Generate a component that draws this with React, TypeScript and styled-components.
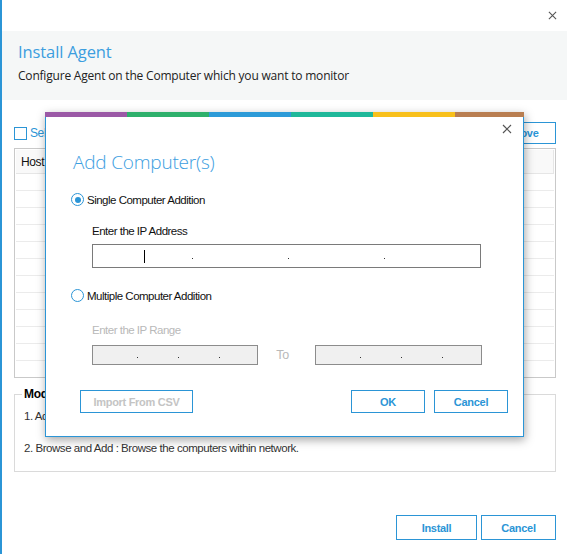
import React from "react";
import styled, { createGlobalStyle } from "styled-components";

const BLUE = "#2b95d6";
const WIN = `"Liberation Sans", Arial, sans-serif`;
const UI = `"Open Sans", "Noto Sans", sans-serif`;

const Global = createGlobalStyle`
  html, body { margin: 0; padding: 0; background: #fff; }
  * { box-sizing: border-box; }
`;

const Window = styled.div`
  position: relative;
  width: 567px;
  height: 554px;
  overflow: hidden;
  background: #fff;
  border-left: 2px solid ${BLUE};
  display: flex;
  flex-direction: column;
`;

const TopBar = styled.div`
  height: 31px;
  display: flex;
  align-items: center;
  justify-content: flex-end;
  padding-right: 10px;
`;

const CloseBtn = styled.span<{ $size: number }>`
  display: inline-flex;
  width: ${(p) => p.$size}px;
  height: ${(p) => p.$size}px;
  color: #555;
`;

const Header = styled.div`
  height: 69px;
  background: #f5f7f7;
  padding: 9px 16px 0 16px;
`;

const HeaderTitle = styled.div`
  font-family: ${UI};
  font-weight: 400;
  font-size: 16.5px;
  line-height: 24px;
  color: #3c9edf;
  letter-spacing: -0.1px;
`;

const HeaderSub = styled.div`
  margin-top: 3px;
  font-family: ${UI};
  font-size: 12px;
  line-height: 18px;
  color: #222;
  letter-spacing: -0.2px;
`;

const Body = styled.div`
  padding: 0 11px 0 12px;
  display: flex;
  flex-direction: column;
`;

const Toolbar = styled.div`
  margin-top: 22px;
  height: 22px;
  display: flex;
  align-items: center;
  justify-content: space-between;
`;

const CheckLabel = styled.label`
  display: flex;
  align-items: center;
  gap: 3px;
  font-family: ${WIN};
  font-size: 12px;
  letter-spacing: -0.4px;
  color: ${BLUE};
`;

const CheckBox = styled.span`
  width: 13px;
  height: 13px;
  border: 1px solid ${BLUE};
  background: #fff;
`;

const OutlineButton = styled.button<{ $w: number; $h: number; $muted?: boolean }>`
  width: ${(p) => p.$w}px;
  height: ${(p) => p.$h}px;
  border: 1px solid ${BLUE};
  background: #fff;
  font-family: ${WIN};
  font-weight: 700;
  font-size: 11px;
  letter-spacing: -0.3px;
  color: ${(p) => (p.$muted ? "#c4c4c4" : BLUE)};
  padding: 0;
  cursor: default;
`;

const Table = styled.div`
  margin-top: 4px;
  height: 230px;
  border: 1px solid #c9c9c9;
  padding: 1px;
  display: flex;
  flex-direction: column;
`;

const HeadRow = styled.div`
  height: 24px;
  background: #f9f9f9;
  border-bottom: 1px solid #e6e6e6;
  display: flex;
`;

const HeadCell = styled.div<{ $w?: number }>`
  width: ${(p) => (p.$w ? `${p.$w}px` : "auto")};
  flex: ${(p) => (p.$w ? "none" : "1")};
  border-right: 1px solid #e6e6e6;
  padding-left: 5px;
  display: flex;
  align-items: center;
  font-family: ${WIN};
  font-size: 12px;
  letter-spacing: -0.4px;
  color: #111;
`;

const Row = styled.div`
  height: 17px;
  border-bottom: 1px solid #ebebeb;
  flex: none;
`;

const Group = styled.fieldset`
  margin: 9px 0 0 0;
  padding: 6px 10px 0 9px;
  height: 85px;
  border: 1px solid #dadada;
`;

const Legend = styled.legend`
  padding: 0 2px;
  margin-left: -2px;
  font-family: ${WIN};
  font-weight: 700;
  font-size: 12px;
  line-height: 14px;
  letter-spacing: -0.3px;
  color: #000;
`;

const GroupLine = styled.div<{ $gap: number }>`
  margin-top: ${(p) => p.$gap}px;
  font-family: ${WIN};
  font-size: 11.5px;
  line-height: 14px;
  letter-spacing: -0.45px;
  color: #333;
`;

const Footer = styled.div`
  margin-top: 43px;
  display: flex;
  justify-content: flex-end;
  gap: 4px;
`;

/* ---------- dialog ---------- */

const Dialog = styled.div`
  position: absolute;
  left: 43px;
  top: 112px;
  width: 479px;
  height: 325px;
  background: #fff;
  border: 1px solid ${BLUE};
  border-top: none;
  box-shadow: 1px 3px 9px rgba(0, 0, 0, 0.35);
  display: flex;
  flex-direction: column;
`;

const Stripe = styled.div`
  height: 5px;
  display: flex;
  margin: 0 -1px;
`;

const StripeSeg = styled.span<{ $c: string; $w: number }>`
  width: ${(p) => p.$w}px;
  flex: none;
  background: ${(p) => p.$c};
`;

const DialogClose = styled.div`
  height: 24px;
  display: flex;
  align-items: center;
  justify-content: flex-end;
  padding-right: 11px;
`;

const DialogTitle = styled.div`
  margin: 8px 0 0 27px;
  font-family: ${UI};
  font-weight: 300;
  font-size: 19px;
  line-height: 26px;
  color: #3c9edf;
  letter-spacing: -0.2px;
`;

const RadioRow = styled.label<{ $mt: number }>`
  margin: ${(p) => p.$mt}px 0 0 25px;
  height: 15px;
  display: flex;
  align-items: center;
  gap: 3px;
  font-family: ${WIN};
  font-size: 11.5px;
  letter-spacing: -0.5px;
  color: #111;
`;

const Radio = styled.span<{ $on?: boolean }>`
  width: 13px;
  height: 13px;
  border-radius: 50%;
  border: 1px solid ${BLUE};
  display: flex;
  align-items: center;
  justify-content: center;
  &::after {
    content: "";
    width: 6px;
    height: 6px;
    border-radius: 50%;
    background: ${(p) => (p.$on ? BLUE : "transparent")};
  }
`;

const FieldLabel = styled.div<{ $mt: number; $muted?: boolean }>`
  margin: ${(p) => p.$mt}px 0 0 46px;
  font-family: ${WIN};
  font-size: 11.5px;
  line-height: 14px;
  letter-spacing: -0.5px;
  color: ${(p) => (p.$muted ? "#b9b9b9" : "#111")};
`;

const IpBox = styled.div<{ $w: number; $h: number; $disabled?: boolean }>`
  width: ${(p) => p.$w}px;
  height: ${(p) => p.$h}px;
  border: 1px solid ${(p) => (p.$disabled ? "#8c8c8c" : "#7a7a7a")};
  background: ${(p) => (p.$disabled ? "#f0f0f0" : "#fff")};
  padding-left: 3px;
  display: flex;
  align-items: stretch;
  flex: none;
`;

const IpSeg = styled.div<{ $w: number }>`
  width: ${(p) => p.$w}px;
  flex: none;
  position: relative;
  display: flex;
  align-items: center;
  justify-content: center;
`;

const IpDot = styled.span`
  position: absolute;
  right: -1px;
  top: 50%;
  width: 1px;
  height: 1px;
  margin-top: 2px;
  background: #333;
`;

const Caret = styled.span`
  width: 1px;
  height: 13px;
  background: #000;
`;

const IpRow = styled.div<{ $mt: number }>`
  margin: ${(p) => p.$mt}px 0 0 46px;
  display: flex;
  align-items: center;
`;

const ToText = styled.div`
  width: 57px;
  text-align: center;
  padding-right: 8px;
  font-family: ${WIN};
  font-size: 12.5px;
  letter-spacing: -0.3px;
  color: #b9b9b9;
`;

const DialogButtons = styled.div`
  margin: 25px 15px 0 34px;
  display: flex;
  align-items: center;
  gap: 9px;
`;

const Spacer = styled.div`
  flex: 1;
`;

function XIcon({ size }: { size: number }) {
  return (
    <CloseBtn $size={size}>
      <svg width={size} height={size} viewBox="0 0 10 10">
        <path d="M1 1 L9 9 M9 1 L1 9" stroke="currentColor" strokeWidth="1.2" fill="none" />
      </svg>
    </CloseBtn>
  );
}

function IpField({
  w,
  h,
  seg,
  disabled,
  caret,
}: {
  w: number;
  h: number;
  seg: number;
  disabled?: boolean;
  caret?: boolean;
}) {
  return (
    <IpBox $w={w} $h={h} $disabled={disabled}>
      {[0, 1, 2, 3].map((i) => (
        <IpSeg key={i} $w={seg}>
          {caret && i === 0 ? <Caret /> : null}
          {i < 3 ? <IpDot /> : null}
        </IpSeg>
      ))}
    </IpBox>
  );
}

const stripe = [
  { c: "#9b59a6", w: 82 },
  { c: "#2eb06b", w: 82 },
  { c: "#2d9bd8", w: 82 },
  { c: "#1fb89a", w: 82 },
  { c: "#f8c01b", w: 82 },
  { c: "#b97e51", w: 69 },
];

export default function App() {
  return (
    <>
      <Global />
      <Window>
        <TopBar>
          <XIcon size={9} />
        </TopBar>
        <Header>
          <HeaderTitle>Install Agent</HeaderTitle>
          <HeaderSub>Configure Agent on the Computer which you want to monitor</HeaderSub>
        </Header>
        <Body>
          <Toolbar>
            <CheckLabel>
              <CheckBox />
              Select All
            </CheckLabel>
            <OutlineButton $w={76} $h={22}>Remove</OutlineButton>
          </Toolbar>
          <Table>
            <HeadRow>
              <HeadCell $w={150}>Host Name</HeadCell>
              <HeadCell $w={150}>IP Address</HeadCell>
              <HeadCell>Status</HeadCell>
            </HeadRow>
            {Array.from({ length: 11 }).map((_, i) => (
              <Row key={i} />
            ))}
          </Table>
          <Group>
            <Legend>Mode of Adding Computers</Legend>
            <GroupLine $gap={2}>1. Add Computer(s) : Add computers by IP address or IP range.</GroupLine>
            <GroupLine $gap={18}>2. Browse and Add : Browse the computers within network.</GroupLine>
          </Group>
          <Footer>
            <OutlineButton $w={81} $h={25}>Install</OutlineButton>
            <OutlineButton $w={75} $h={25}>Cancel</OutlineButton>
          </Footer>
        </Body>

        <Dialog>
          <Stripe>
            {stripe.map((s, i) => (
              <StripeSeg key={i} $c={s.c} $w={s.w} />
            ))}
          </Stripe>
          <DialogClose>
            <XIcon size={10} />
          </DialogClose>
          <DialogTitle>Add Computer(s)</DialogTitle>
          <RadioRow $mt={17}>
            <Radio $on />
            Single Computer Addition
          </RadioRow>
          <FieldLabel $mt={17}>Enter the IP Address</FieldLabel>
          <IpRow $mt={6}>
            <IpField w={389} h={24} seg={96} caret />
          </IpRow>
          <RadioRow $mt={20}>
            <Radio />
            Multiple Computer Addition
          </RadioRow>
          <FieldLabel $mt={20} $muted>
            Enter the IP Range
          </FieldLabel>
          <IpRow $mt={8}>
            <IpField w={166} h={20} seg={41} disabled />
            <ToText>To</ToText>
            <IpField w={167} h={20} seg={41} disabled />
          </IpRow>
          <DialogButtons>
            <OutlineButton $w={113} $h={23} $muted>
              Import From CSV
            </OutlineButton>
            <Spacer />
            <OutlineButton $w={74} $h={23}>OK</OutlineButton>
            <OutlineButton $w={74} $h={23}>Cancel</OutlineButton>
          </DialogButtons>
        </Dialog>
      </Window>
    </>
  );
}
